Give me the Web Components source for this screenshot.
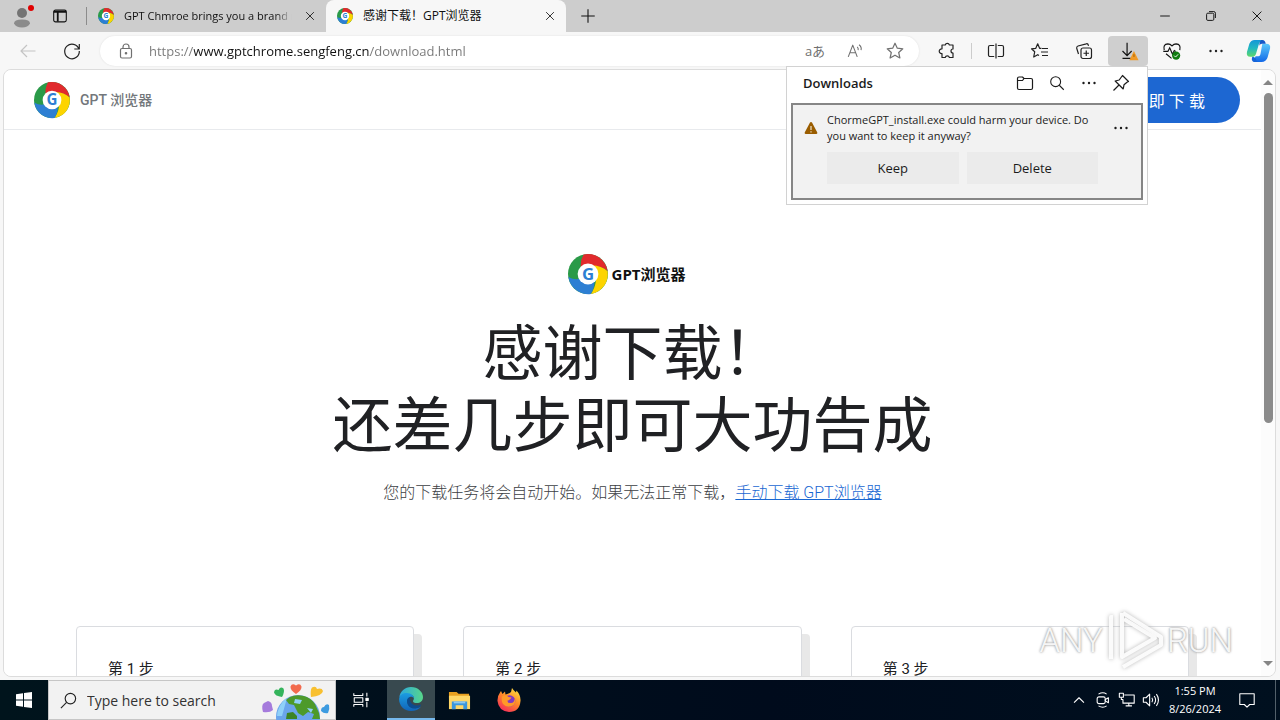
<!DOCTYPE html>
<html lang="zh-CN">
<head>
<meta charset="utf-8">
<title>感谢下载！GPT浏览器</title>
<style>
  html, body { margin: 0; height: 100%; overflow: hidden; }
  body { font-family: "Open Sans", "Noto Sans CJK SC", sans-serif; font-size: 12px; color: #1b1b1b; }
</style>
</head>
<body>
<desk-top></desk-top>

<script>
(function () {
  "use strict";

  // line icons, drawn on a 20x20 grid with the current text colour
  var LINE = {
    back: '<path d="M17.5 10H3M9 4l-6 6 6 6"/>',
    reload: '<path d="M16.9 8A7.3 7.3 0 1 0 17.3 10M17.3 3v5h-5"/>',
    lock: '<rect x="4.5" y="7.5" width="11" height="9.5" rx="1.5"/><path d="M7 7.500V6a3 3 0 0 1 6 0v1.500"/><circle cx="10" cy="12.200" r=".7" fill="currentColor"/>',
    star: '<path d="M10 2.200l2.300 5 5.500.600-4.100 3.700 1.200 5.500L10 14.200 5.100 17l1.200-5.500L2.200 7.800l5.500-.600z"/>',
    puzzle: '<path d="M5 4h3.200a2.200 2.200 0 0 1 4.200 0H16V8a2 2 0 1 0 0 4V16.500H12.400a2.200 2.200 0 0 0-4.200 0H5V12.500a2.300 2.300 0 1 1 0-4.500z"/>',
    split: '<path d="M8.200 4.500H4a1.500 1.500 0 0 0-1.500 1.500v8A1.500 1.500 0 0 0 4 15.500h4.200M11.800 4.500H16a1.500 1.500 0 0 1 1.500 1.500v8a1.500 1.500 0 0 1-1.500 1.500h-4.200M10 2.500v15"/>',
    favorites: '<path d="M11.500 7.300H9.600L7.700 2.800 5.800 7.300l-4.300.500 3.200 3-1 5.200 4-2.300 1.300.8M12 7.500h6M11 11h7M12 14.500h6"/>',
    collections: '<rect x="7" y="7" width="10.500" height="10.500" rx="2"/><path d="M12.250 9.500v5.500M9.500 12.250H15M14.500 4.800l-.3-1A1.500 1.500 0 0 0 12.300 2.800L4 5A2 2 0 0 0 2.700 7.300L4.500 13"/>',
    more: '<g fill="currentColor" stroke="none"><circle cx="4.500" cy="10" r="1.200"/><circle cx="10" cy="10" r="1.200"/><circle cx="15.500" cy="10" r="1.200"/></g>',
    folder: '<path d="M2.500 5.500A1.500 1.500 0 0 1 4 4h3.500L9 5.500H16A1.500 1.500 0 0 1 17.500 7v8A1.500 1.500 0 0 1 16 16.500H4A1.500 1.500 0 0 1 2.500 15zM2.500 7.500h5l1.500-2"/>',
    search: '<circle cx="8.500" cy="8.500" r="5.500"/><path d="M12.500 12.500l5 5"/>',
    pin: '<path d="M11.500 2.500l6 6-1.500.7-3 2.600-.8 4.200-8-8 4-1 2.200-3zM8 12l-5.500 5.500"/>',
    close: '<path d="M4.500 4.500l11 11M15.500 4.500l-11 11"/>',
    plus: '<path d="M10 2.500v15M2.500 10h15"/>',
    minimize: '<path d="M4 10h12"/>',
    restore: '<rect x="4.500" y="6.500" width="9" height="9" rx="1.500"/><path d="M7.500 4.500h6a2 2 0 0 1 2 2v6"/>',
    tabs: '<rect x="3" y="3.500" width="14" height="13" rx="2"/><path d="M3 5.500h14M7.500 6v10" stroke-width="2"/>',
    magnify: '<circle cx="12" cy="8" r="5.500"/><path d="M8 12l-6 6"/>',
    taskview: '<path d="M2 2.500v2.500h10V2.500M2 17.500V15h10v2.500M2.500 7.500h9.500v5H2.500zM16.500 2v4M16.500 12v6"/><rect x="15.500" y="8" width="2.500" height="2.500" fill="currentColor"/>',
    chevron: '<path d="M4.500 13l5.500-5.500 5.500 5.500"/>',
    meet: '<path d="M5 3.500q5-3 9 0M5 16.500q5 3 9 0"/><rect x="3.500" y="6.500" width="9" height="7.500" rx="2"/><path d="M12.500 9.500l3.500-2v5.500l-3.500-2z"/>',
    network: '<path d="M7 4.500h11v9H5.500V9.500M12 13.500v3M8.500 16.500h7"/><rect x="1.500" y="2.500" width="4.500" height="4.500"/><path d="M3.700 7v2.500h2"/>',
    volume: '<path d="M1.500 7.500h3l4-4v13l-4-4h-3zM11 7.500q1.800 2.500 0 5M13.500 5.500q3.300 4.500 0 9M16 3.500q4.600 6.500 0 13"/>',
    notify: '<path d="M2 3h16v12h-5l-3 3-3-3H2z"/>',
    readaloud: '<path d="M2.500 16.500l5-13 5 13M4.300 12h6.400M12.500 5.500q1.500 1.500 1 3.500M14.500 3q3.200 2.500 2.200 6"/>'
  };

  // full colour pictures, each with its own view box
  var ART = {
    logo: ["0 0 100 100",
      '<circle cx="50" cy="50" r="50" fill="#2a9a48"/>' +
      '<path fill="#e12a2d" d="M39 1A50 50 0 0 1 99 43C86 31 70 30 60 30L33 38Q29 18 39 1z"/>' +
      '<path fill="#fdd400" d="M99 43A50 50 0 0 1 57 100C68 84 70 70 70 60L60 28Q84 29 99 43z"/>' +
      '<path fill="#2d7fd3" d="M57 100A50 50 0 0 1 1 57C12 64 22 64 30 62L66 68Q66 86 57 100z"/>' +
      '<circle cx="50" cy="50" r="26" fill="#fff"/>' +
      '<text x="50" y="65" text-anchor="middle" font-family="Open Sans,sans-serif" font-weight="700" font-size="42" fill="#2d7fd3">G</text>'],
    profile: ["0 0 24 24",
      '<circle cx="12" cy="9" r="5" fill="#747474"/><path fill="#8b8b8b" d="M4 19.500q0-4 8-4t8 4q-2 4-8 4t-8-4z"/>' +
      '<circle cx="21" cy="4" r="3" fill="#e00000"/>'],
    warn: ["0 0 16 16",
      '<path fill="#9a5d00" d="M8 2q.7 0 1 .6l5.300 10q.4 1.400-.9 1.400H2.600q-1.300 0-.9-1.400l5.300-10Q7.300 2 8 2z"/>' +
      '<path stroke="#f0e4d0" stroke-width="1.200" d="M8 6v4M8 11.300v1.200"/>'],
    download: ["0 0 24 24",
      '<path d="M11 3v14M6 12l5 5 5-5M6 20h9" fill="none" stroke="#111" stroke-width="1.300"/>' +
      '<path fill="#f09a28" d="M18.500 12l5 10H13.500z"/><path stroke="#9a5d00" d="M18.500 15.500v3"/>'],
    health: ["0 0 24 24",
      '<path d="M3.500 11Q2 4.500 7.500 4.200 10 4.200 12 6.500 14 4.200 16.500 4.200 22 4.500 20.500 11M2.500 12.500h5l2-4 3 7 2-4 1.500 1M5.500 15l6 5" fill="none" stroke="#111" stroke-width="1.300"/>' +
      '<circle cx="16.500" cy="17" r="4.500" fill="#107c10"/><path d="M14.300 17l1.600 1.600 2.800-3" fill="none" stroke="#fff"/>'],
    copilot: ["0 0 26 26",
      '<defs><linearGradient id="a" x1="0" y1="0" x2="0" y2="1"><stop offset="0" stop-color="#1496d8"/><stop offset=".5" stop-color="#22b8c0"/><stop offset="1" stop-color="#5fd86a"/></linearGradient>' +
      '<linearGradient id="b" x1="0" y1="0" x2="0" y2="1"><stop offset="0" stop-color="#5ac8fa"/><stop offset="1" stop-color="#1268e8"/></linearGradient></defs>' +
      '<path fill="url(#b)" d="M17 6h4q5 0 4 5l-2.500 9Q21 25 16 25h-5q-3 0-2-4l1-2h3q1.500 0 2-2z"/>' +
      '<path fill="#1558c8" d="M14 2h3q3 0 3.500 4h-4q-2 0-2.500 2z"/>' +
      '<path fill="url(#a)" d="M9 2h7q-1.500 1-2.500 4L10.500 16q-1 3.500-4 3.500H4.500Q0 19.500 1 14.500L3.500 6Q5 2 9 2z"/>' +
      '<path fill="#1664d8" d="M6.500 19.500q3 0 4 3 .5 2.500 3 2.500h-4q-3 0-3.500-3z"/>'],
    windows: ["0 0 16 16", '<path fill="#fff" d="M0 2.300l7-1v6.200H0zM8 1.100L16 0v7.500H8zM0 8.500h7v6.200l-7-1zM8 8.500h8V16l-8-1.100z"/>'],
    edge: ["0 0 24 24",
      '<defs><linearGradient id="a" x1="0" x2="1"><stop offset="0" stop-color="#2ba8e0"/><stop offset="1" stop-color="#57d68a"/></linearGradient>' +
      '<linearGradient id="b" x1="0" y1="0" x2="0" y2="1"><stop offset="0" stop-color="#1b9de2"/><stop offset="1" stop-color="#1164b8"/></linearGradient></defs>' +
      '<path fill="url(#a)" d="M.3 10.500C1 4.500 6 0 12 0c7 0 12 5 12 10 0 4-3 6-6 6-4 0-4.500-1.500-3.500-3 1.500-3-1-5.500-4-5.500C5 6.500 1 8 .3 10.500z"/>' +
      '<path fill="url(#b)" d="M.1 12C.5 8 4 5.500 8 6c4 .2 7 2.500 7 5.500-1-1.500-2.500-2-4-1.500-3.500 2-3.500 7 0 9.500s8 2 11 0C20 22.500 16 24 12 24 5 24 0 18.500.1 12z"/>' +
      '<path fill="#0c4c8f" d="M8 14c0-2 1-3.500 3-4-1 4 1.500 8 6.500 8.500 1.500.2 3-.3 4.500-1-.3 3-5 4.500-8 4-4-.7-6-4-6-7.500z"/>'],
    explorer: ["0 0 24 24",
      '<path fill="#e8a020" d="M1 3h8l2 2h11v5H1z"/><path fill="#ffd767" d="M1 7h22v14H1z"/>' +
      '<path fill="#3a96dd" d="M4 13h16v8h-4v-4H8v4H4z"/><path fill="#8cc8f0" d="M6 13h12v2H6z"/>'],
    firefox: ["0 0 24 24",
      '<defs><linearGradient id="a" x1=".8" y1="0" x2=".2" y2="1"><stop offset="0" stop-color="#ffe040"/><stop offset=".45" stop-color="#ff8a28"/><stop offset="1" stop-color="#f4265e"/></linearGradient></defs>' +
      '<path fill="url(#a)" d="M15 0q1.500 2.500 4 4.500l.500-2Q24 7.500 23.500 13 22.500 24 12 24 1.500 23 .5 13 .3 8 3 4.500L4 3l1.500 3L8 3.500 8.500 6.500Q12 6 14 4z"/>' +
      '<circle cx="12.500" cy="13" r="5.800" fill="#8238c4"/><path fill="#ff9a28" d="M5 8.500q4-2.500 6.500.5l3 .5q-1 2.500-4 3 0 3 3.500 2.500 4-.5 3.500-5 2 5-1.500 7.500-6 3-10-1.500Q4 12.500 5 8.500z"/>'],
    doodle: ["0 0 70 38",
      '<circle cx="36" cy="36" r="22" fill="#6aa5ec"/><path fill="#8fd0f8" d="M17 27q3-7 8-10l-5 18h-5q0-4 2-8z"/>' +
      '<path fill="#4d9a2a" d="M28 16q6-3 14-1 7 2 11 8l4 9 1 6H50l2-5-6-2-5 4-5-3-4-8-5-1-3-4z"/>' +
      '<path fill="#3c8425" d="M24 38l1-6 6-1 4 4v3z"/><path fill="#8fd0f8" d="M33 18l7 1-2 4-6-1zM45 27l6 1-2 4z"/>' +
      '<path fill="#f26b4e" d="M34 13q-6-4-5.500-7.500Q30 1.500 34 4.500q4-3 5.500 1Q40 9 34 13z"/>' +
      '<path fill="#35b45c" d="M20 16q-7-1-8-4.500.5-4 4.500-2.500 2-4 5-1.500Q23 11 20 16z"/>' +
      '<path fill="#f8c030" d="M49 16q-1-7 1-9.500 4-2 5 1.500 5-1.500 6 2-1 5-12 6z"/>' +
      '<path fill="#a57bdc" d="M1 31q-2-7 1-9l4-2q4 1 4 5l1 4q-3 3-10 2z"/>' +
      '<path fill="#3d9be0" d="M59 30q0-4 3-4 2-4 5-2 1 4-1 8-4 1-7-2z"/>']
  };

  class UiIcon extends HTMLElement {
    constructor() {
      super();
      this.attachShadow({ mode: "open" });
    }
    connectedCallback() {
      var name = this.getAttribute("name");
      var size = this.getAttribute("size") || "20";
      var art = ART[name];
      var svg = art
        ? '<svg viewBox="' + art[0] + '" aria-hidden="true">' + art[1] + "</svg>"
        : '<svg viewBox="0 0 20 20" fill="none" stroke="currentColor" stroke-width="1.200" stroke-linejoin="round" aria-hidden="true">' + LINE[name] + "</svg>";
      this.shadowRoot.innerHTML =
        "<style>:host{display:block;flex:none;width:" + size + "px}svg{display:block;width:100%;overflow:visible}</style>" + svg;
    }
  }
  customElements.define("ui-icon", UiIcon);

  // registers an element that only has static styles and markup
  function define(name, css, html) {
    var tpl = document.createElement("template");
    tpl.innerHTML =
      "<style>*{box-sizing:border-box}button{font:inherit;color:inherit;border:0;padding:0;background:none}" +
      css + "</style>" + html;
    customElements.define(name, class extends HTMLElement {
      constructor() {
        super();
        this.attachShadow({ mode: "open" }).appendChild(tpl.content.cloneNode(true));
      }
    });
  }

  function iconButton(icon, label, size) {
    return '<button class="ib" type="button" aria-label="' + label + '"><ui-icon name="' +
      icon + '" size="' + (size || 20) + '"></ui-icon></button>';
  }

  define("browser-tab",
    ":host{display:flex;align-items:center;box-sizing:border-box;width:239px;height:32px;padding:0 8px 0 11px;gap:10px;color:#111}" +
    ":host([active]){background:#f7f7f7;border-radius:8px 8px 0 0;width:240px}" +
    ".title{flex:1;min-width:0;overflow:hidden;white-space:nowrap;font-size:11px;line-height:20px}" +
    ":host([active]) .title{font-size:12px}" +
    ":host(:not([active])) .title{-webkit-mask-image:linear-gradient(to right,#000 90%,transparent)}" +
    ".ib{width:16px;height:16px;display:grid;place-items:center}",
    '<ui-icon name="logo" size="16"></ui-icon><span class="title"><slot></slot></span>' +
    iconButton("close", "Close tab", 14));

  define("tab-strip",
    ":host{display:flex;height:32px;background:#cdcdcd;color:#111}" +
    ".ib{display:grid;place-items:center;width:44px;height:32px}" +
    ".start{display:flex;width:87px;background:linear-gradient(#8c8c8c,#8c8c8c) no-repeat right 7px/1px 18px}" +
    ".start .ib:last-child{width:32px}" +
    ".win{display:flex;margin-left:auto}.win .ib{width:46px}",
    '<div class="start">' + iconButton("profile", "Profile", 24) + iconButton("tabs", "Tab actions", 18) + "</div>" +
    '<browser-tab>GPT Chmroe brings you a brand new</browser-tab><browser-tab active>感谢下载！GPT浏览器</browser-tab>' +
    iconButton("plus", "New tab", 18) +
    '<div class="win">' + iconButton("minimize", "Minimize", 16) + iconButton("restore", "Restore", 16) + iconButton("close", "Close", 16) + "</div>");

  define("tool-bar",
    ":host{display:flex;align-items:center;height:37px;padding:0 4px 0 8px;gap:4px;color:#222}" +
    ".ib{display:grid;place-items:center;width:40px;height:30px;border-radius:4px}" +
    ".ib:last-child{width:36px}" +
    ".off{color:#c4c4c4}.on .ib{width:40px;background:#cfcfcf}.on{display:flex}.off .ib,.address .ib{width:40px}" +
    ".address{flex:1;display:flex;align-items:center;height:30px;margin-left:4px;margin-right:4px;padding:0 4px 0 16px;background:#fff;border-radius:15px;color:#707070;box-shadow:0 0 2px #ddd}" +
    "input{flex:1;min-width:0;border:0;outline:0;padding:0;margin-left:13px;height:24px;font:inherit;font-size:13px;color:#111;" +
    "background:linear-gradient(to right,#777 45px,#111 45px,#111 221px,#777 221px);-webkit-background-clip:text;background-clip:text;-webkit-text-fill-color:transparent}" +
    ".translate{width:40px;height:30px;font-size:13px}" +
    ".sep{width:1px;height:16px;background:#ccc}",
    '<span class="off">' + iconButton("back", "Back") + "</span>" + iconButton("reload", "Refresh") +
    '<div class="address"><ui-icon name="lock"></ui-icon>' +
    '<input type="text" aria-label="Address" value="https://www.gptchrome.sengfeng.cn/download.html">' +
    '<button class="translate" type="button" aria-label="Translate">aあ</button>' +
    iconButton("readaloud", "Read aloud", 18) + iconButton("star", "Add to favorites") + "</div>" +
    iconButton("puzzle", "Extensions") + '<span class="sep"></span>' + iconButton("split", "Split screen") +
    iconButton("favorites", "Favorites") + iconButton("collections", "Collections") +
    '<span class="on">' + iconButton("download", "Downloads", 22) + "</span>" +
    iconButton("health", "Browser essentials", 22) + iconButton("more", "Settings") + iconButton("copilot", "Copilot", 25));

  define("downloads-flyout",
    ":host{display:block;box-sizing:border-box;background:#fff;border:1px solid #d2d2d2;padding:0 4px 4px;color:#1b1b1b}" +
    "header{display:flex;align-items:center;height:36px;padding:0 6px 4px 12px}" +
    "h2{flex:1;margin:0;font-size:13px;font-weight:600;line-height:20px}" +
    ".ib{display:grid;place-items:center;width:32px;height:32px}" +
    ".item{display:flex;align-items:flex-start;background:#f2f2f2;border:2px solid #868686;padding:7px 4px 14px 10px}" +
    ".item>ui-icon{margin:8px 8px 0 0}.body{flex:1;margin-right:7px}" +
    "p{margin:0;font-size:11px;line-height:16px}" +
    ".actions{display:flex;gap:8px;margin-top:8px}" +
    ".actions button{flex:1;height:32px;background:#ebebeb;font-size:13px}",
    "<header><h2>Downloads</h2>" + iconButton("folder", "Open downloads folder") + iconButton("search", "Search downloads", 18) +
    iconButton("more", "More options") + iconButton("pin", "Pin downloads") + "</header>" +
    '<div class="item"><ui-icon name="warn" size="16"></ui-icon><div class="body">' +
    "<p>ChormeGPT_install.exe could harm your device. Do you want to keep it anyway?</p>" +
    '<div class="actions"><button type="button">Keep</button><button type="button">Delete</button></div></div>' +
    iconButton("more", "More actions") + "</div>");

  define("step-card",
    ":host{display:block;flex:1;box-sizing:border-box;min-height:200px;padding:34px 31px;background:#fff;border:1px solid #dadce0;border-radius:4px;box-shadow:8px 8px 0 #e8e8e8;font-family:Roboto,'Noto Sans CJK SC',sans-serif;font-size:15px;line-height:16px;color:#202124}",
    "<slot></slot>");

  define("scroll-bar",
    ":host{display:flex;flex-direction:column;align-items:center;width:14px;padding:10px 0;gap:8px;background:#fcfcfc}" +
    "i{border:5px solid transparent;border-top:0;border-bottom:5px solid #858585}" +
    "i:last-child{transform:rotate(180deg)}" +
    ".track{flex:1}.thumb{height:59%;width:9px;border-radius:5px;background:#8b8b8b}",
    '<i></i><div class="track"><div class="thumb"></div></div><i></i>');

  define("download-page",
    ":host{display:block;overflow:hidden;background:#fff;color:#202124}" +
    "header{display:flex;align-items:center;height:60px;padding:0 21px 0 30px;border-bottom:1px solid #e8eaed;gap:10px}" +
    ".brand{flex:1;font:500 14px/20px Roboto,'Noto Sans CJK SC',sans-serif;color:#73777b}" +
    ".get{height:46px;padding:0 35px;border-radius:23px;background:#1d67d2;color:#fff;font-size:16px}" +
    ".hero{padding-top:124px;text-align:center}" +
    ".mark{display:flex;align-items:center;justify-content:center;gap:4px;padding-right:12px;font-size:15px;line-height:20px;font-weight:700;color:#111}" +
    "h1{margin:25px 0 18px;font-size:60px;line-height:72px;font-weight:400;font-family:Roboto,'Noto Sans CJK SC',sans-serif}" +
    "p{margin:0;font-size:16px;line-height:24px;color:#3c4043;font-family:Roboto,'Noto Sans CJK SC',sans-serif;font-weight:300}" +
    "a{color:#1967d2}" +
    ".steps{display:flex;gap:49px;padding:121px 72px 40px}",
    '<header><ui-icon name="logo" size="36"></ui-icon><span class="brand">GPT 浏览器</span><button class="get" type="button">立 即 下 载</button></header>' +
    '<div class="hero"><div class="mark"><ui-icon name="logo" size="40"></ui-icon><span>GPT浏览器</span></div>' +
    "<h1>感谢下载！<br>还差几步即可大功告成</h1>" +
    '<p>您的下载任务将会自动开始。如果无法正常下载，<a href="#">手动下载 GPT浏览器</a></p></div>' +
    '<div class="steps"><step-card>第 1 步</step-card><step-card>第 2 步</step-card><step-card>第 3 步</step-card></div>');

  define("water-mark",
    ":host{display:flex;align-items:center;gap:2px;pointer-events:none;font:300 33px/62px Roboto,sans-serif;color:rgba(255,255,255,.9);text-shadow:0 0 3px #a0a0a0,0 0 2px #b8b8b8}" +
    "svg{display:block;width:60px;height:62px;filter:drop-shadow(0 0 2px #b0b0b0)}",
    '<span>ANY</span><svg viewBox="0 0 60 62" fill="none" stroke="#fff" stroke-opacity=".9" stroke-width="4" stroke-linejoin="round" aria-hidden="true">' +
    '<path d="M17 3v44l33-19-31-19M8 7H6v42M18 57l38-22V27L18 3"/></svg><span>RUN</span>');

  define("task-bar",
    ":host{display:flex;height:40px;background:linear-gradient(to right,#00141c,#000b1c 60%,#00101f);color:#fff}" +
    ".ib{display:grid;place-items:center;width:49px;height:40px}" +
    ".start{width:48px;display:flex}" +
    ".find{display:flex;align-items:center;width:288px;padding:0 3px 0 10px;background:#f2f2f2;border:1px solid #c6c6c6;color:#222}" +
    "input{flex:1;min-width:0;border:0;outline:0;background:none;padding:0;margin-left:9px;font:inherit;font-size:14px}" +
    "input::placeholder{color:#333;opacity:1}" +
    ".apps{display:flex}.open{display:flex;margin-left:2px;background:#38494f;border-bottom:2px solid #76b9ed}.open .ib{width:48px;height:38px}" +
    ".tray{display:flex;margin-left:auto}.tray .ib{width:24px}" +
    ".clock{width:64px;font-size:11px;line-height:18px;text-align:center;padding:2px 0}" +
    ".tray .ib:last-of-type{width:40px}.peek{width:5px;border-left:1px solid #52606a;margin-left:8px}",
    '<div class="start">' + iconButton("windows", "Start", 16) + "</div>" +
    '<label class="find"><ui-icon name="magnify" size="19"></ui-icon><input type="text" placeholder="Type here to search" aria-label="Type here to search"><ui-icon name="doodle" size="70"></ui-icon></label>' +
    '<div class="apps">' + iconButton("taskview", "Task View", 18) + '<span class="open">' + iconButton("edge", "Edge", 24) + "</span>" +
    iconButton("explorer", "File Explorer", 23) + iconButton("firefox", "Firefox", 24) + "</div>" +
    '<div class="tray">' + iconButton("chevron", "Hidden icons", 18) + iconButton("meet", "Meet Now", 18) + iconButton("network", "Network", 18) + iconButton("volume", "Volume", 18) +
    '<div class="clock">1:55 PM<br>8/26/2024</div>' + iconButton("notify", "Notifications", 18) + '<span class="peek"></span></div>');

  define("desk-top",
    ":host{display:flex;flex-direction:column;height:100%;background:#f7f7f7}" +
    "main{flex:1;min-height:0;display:flex;margin:0 4px 3px 3px;border:1px solid #dcdcdc;border-radius:8px;overflow:hidden}" +
    "download-page{flex:1;min-width:0}" +
    "downloads-flyout{position:absolute;top:66px;right:132px;width:362px}" +
    "water-mark{position:absolute;right:47px;bottom:48px}",
    "<tab-strip></tab-strip><tool-bar></tool-bar>" +
    "<main><download-page></download-page><scroll-bar></scroll-bar></main>" +
    "<task-bar></task-bar><downloads-flyout></downloads-flyout><water-mark></water-mark>");
})();
</script>
</body>
</html>
